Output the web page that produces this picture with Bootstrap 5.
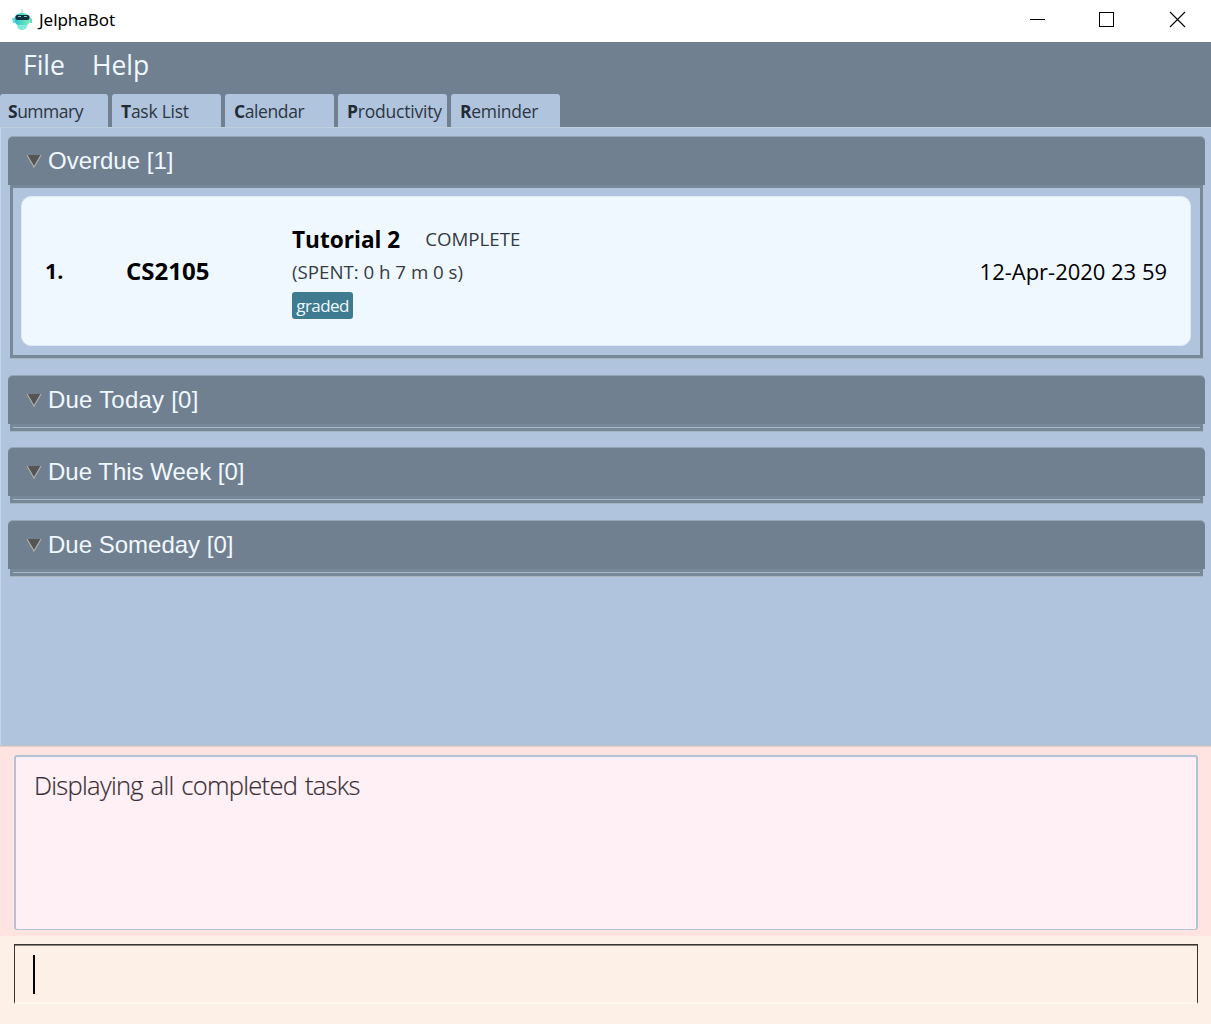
<!DOCTYPE html>
<html lang="en">
<head>
<meta charset="utf-8">
<meta name="viewport" content="width=device-width, initial-scale=1">
<title>JelphaBot</title>
<link href="https://cdn.jsdelivr.net/npm/bootstrap@5.3.0/dist/css/bootstrap.min.css" rel="stylesheet">
<style>
body{font-family:"Open Sans","Noto Sans",sans-serif;color:#000;background:#b0c4de;line-height:1;overflow:hidden}
.app{height:1024px}
.titlebar{height:42px;padding-left:12px}
.titlebar .name{font-size:17px;margin-left:7px;letter-spacing:-.05px;font-family:"Noto Sans",sans-serif;line-height:22px;padding-bottom:2px}
.win-btn{width:70px;height:42px}
.win-btns{margin-right:-2px}
.menus{height:52px;background:#708090;padding-left:23px;gap:27px;color:#f0f8ff;font-size:26.5px;padding-bottom:6px}
.tabs{height:33px;background:#708090;gap:4px}
.tab-item{width:109px;background:#b0c4de;border-radius:3px 3px 0 0;padding:3px 0 0 9px;font-size:17.5px;color:#2d3640;white-space:nowrap}
.tab-item:first-child{width:108px;padding-left:8px}
.tab-item b{color:#222b33}
.t1{letter-spacing:-.5px}
.t2{letter-spacing:-.25px}
.t3{letter-spacing:-.4px}
.t4{letter-spacing:-.2px}
.t5{letter-spacing:-.3px}
.board{height:618px;border-top:1px solid #bfd0dc;border-left:1px solid #c3d5e8;padding:8px 6px 0 7px}
.group-head{height:49px;background:#708090;border-top:1px solid #94a5b5;border-radius:5px 5px 0 0;padding:0 0 0 18px;color:#f0f8ff;font:24px/1 "Liberation Sans",Arial,sans-serif}
.group-head svg{margin-right:6px}
.ls-a{letter-spacing:.22px}
.group-body{margin:0 2px;border:3px solid #778899;box-shadow:0 1px 0 #a7b3bd}
.group-body.filled{height:173px;padding:8px 9px 6px 8px}
.group-body.vacant{height:7px;background:#aab9c6}
.gap-a{margin-bottom:17px}
.gap-b{margin-bottom:16px}
.task{height:150px;background:#f0f8ff;border-radius:10px;border:1px solid #dfeaf8;padding:0 23px 1px;font-size:22px}
.task .num{width:81px;font-size:21.5px}
.task .code{width:166px;font-size:24px;padding-top:1px}
.task .title-row{height:33px}
.task .ttl{margin-right:25px;font-size:22.6px;padding-top:3px}
.task .stat{padding-top:2px}
.task .stat,.task .spent{font-size:18.7px;color:#333b44}
.task .spent{height:33px;line-height:34px}
.tag-chip{background:#3e7b91;color:#f0f8ff;border-radius:3px;height:27px;width:61px;font-size:17px;letter-spacing:-.6px}
.date{letter-spacing:-.02px}
.divider{height:2px;background:linear-gradient(#c4c3c6 50%,#e6cdce 50%)}
.result{height:189px;background:#ffe4e1;padding:8px 13px 6px 14px}
.result-box{height:175px;background:#fff0f5;border:2px solid #b3c2d3;border-bottom-width:1px;border-radius:3px;padding:16px 18px;font-size:25.5px;letter-spacing:-.7px;word-spacing:1.8px;font-weight:300;color:#352c31;-webkit-text-stroke:.2px #4c4248}
.command{height:88px;background:#fdf0e6;padding:8px 13px 0 14px}
.command-box{height:60px;border:1px solid #393430;border-bottom:2px solid #fff8ee;padding:10px 0 0 18px;box-shadow:inset 0 1px #8b837c}
.caret{width:1.500px;height:39px;background:#000}
.fit{display:inline-block;white-space:nowrap}
</style>
<script src="https://cdn.jsdelivr.net/npm/bootstrap@5.3.0/dist/js/bootstrap.bundle.min.js"></script>
</head>
<body>
<div class="app d-flex flex-column">
  <header class="titlebar bg-white d-flex align-items-center flex-shrink-0">
    <svg width="20" height="24" viewBox="0 0 20 24">
      <defs><linearGradient id="g" x1="0" x2="1"><stop offset="0" stop-color="#25bfd2"/><stop offset="1" stop-color="#7df0b2"/></linearGradient></defs>
      <path d="M10 1V6" stroke="#a9e6c8" stroke-width="1.600"/><circle cx="10" cy="1.500" r="1.200" fill="#c5eed8"/>
      <path d="M2.500 9Q4 4 10 4T18 9V13Q16.500 16.500 10 16.500T3 13Z" fill="url(#g)"/>
      <path d="M0 9h3v5H1zM18 8l2 2v4h-2z" fill="#64dccb"/>
      <rect x="3.500" y="6" width="14" height="5" rx="2" fill="#102f3c"/>
      <path d="M6 7.500h3M12 7.500h3" stroke="#79c5d4"/>
      <path d="M4.500 15Q10 18 16 15L14 19.500Q10 22.500 6 19.500Z" fill="#7ce9dc"/>
    </svg>
    <span class="name"><span class="fit">JelphaBot</span></span>
    <div class="win-btns d-flex ms-auto">
      <div class="win-btn"><svg width="70" height="42"><path d="M27 19.500h15" stroke="#000"/></svg></div>
      <div class="win-btn"><svg width="70" height="42"><rect x="26.500" y="12.500" width="14" height="14" fill="none" stroke="#000"/></svg></div>
      <div class="win-btn"><svg width="70" height="42"><path d="M29 12l15 15M44 12L29 27" transform="translate(-2)" stroke="#000" stroke-width="1.100"/></svg></div>
    </div>
  </header>
  <nav class="menus d-flex align-items-center flex-shrink-0"><span class="fit">File</span><span class="fit">Help</span></nav>
  <div class="tabs d-flex flex-shrink-0">
    <div class="tab-item d-flex align-items-center"><span class="fit t1"><b>S</b>ummary</span></div>
    <div class="tab-item d-flex align-items-center"><span class="fit t2"><b>T</b>ask List</span></div>
    <div class="tab-item d-flex align-items-center"><span class="fit t3"><b>C</b>alendar</span></div>
    <div class="tab-item d-flex align-items-center"><span class="fit t4"><b>P</b>roductivity</span></div>
    <div class="tab-item d-flex align-items-center"><span class="fit t5"><b>R</b>eminder</span></div>
  </div>
  <main class="board flex-shrink-0">
    <section class="gap-a">
      <div class="group-head d-flex align-items-center"><svg width="16" height="14" viewBox="0 0 16 14"><path d="M1 1h14L8 13z" fill="#555" /><path d="M1 1L8 13 15 1" fill="none" stroke="#b0b0ac" stroke-width="1.200"/></svg>Overdue [1]</div>
      <div class="group-body filled">
        <div class="task d-flex align-items-center">
          <b class="num">1.</b>
          <b class="code"><span class="fit">CS2105</span></b>
          <div>
            <div class="title-row d-flex align-items-center"><b class="ttl fit">Tutorial 2</b><span class="stat fit">COMPLETE</span></div>
            <div class="spent"><span class="fit">(SPENT: 0 h 7 m 0 s)</span></div>
            <div class="tag-chip d-flex align-items-center justify-content-center mt-1"><span class="fit">graded</span></div>
          </div>
          <span class="date fit ms-auto">12-Apr-2020 23 59</span>
        </div>
      </div>
    </section>
    <section class="gap-b">
      <div class="group-head d-flex align-items-center ls-a"><svg width="16" height="14" viewBox="0 0 16 14"><path d="M1 1h14L8 13z" fill="#555" /><path d="M1 1L8 13 15 1" fill="none" stroke="#b0b0ac" stroke-width="1.200"/></svg>Due Today [0]</div>
      <div class="group-body vacant"></div>
    </section>
    <section class="gap-a">
      <div class="group-head d-flex align-items-center"><svg width="16" height="14" viewBox="0 0 16 14"><path d="M1 1h14L8 13z" fill="#555" /><path d="M1 1L8 13 15 1" fill="none" stroke="#b0b0ac" stroke-width="1.200"/></svg>Due This Week [0]</div>
      <div class="group-body vacant"></div>
    </section>
    <section>
      <div class="group-head d-flex align-items-center"><svg width="16" height="14" viewBox="0 0 16 14"><path d="M1 1h14L8 13z" fill="#555" /><path d="M1 1L8 13 15 1" fill="none" stroke="#b0b0ac" stroke-width="1.200"/></svg>Due Someday [0]</div>
      <div class="group-body vacant"></div>
    </section>
  </main>
  <div class="divider flex-shrink-0"></div>
  <section class="result flex-shrink-0"><div class="result-box"><span class="fit">Displaying all completed tasks</span></div></section>
  <footer class="command flex-shrink-0"><div class="command-box"><div class="caret"></div></div></footer>
</div>
</body>
</html>
